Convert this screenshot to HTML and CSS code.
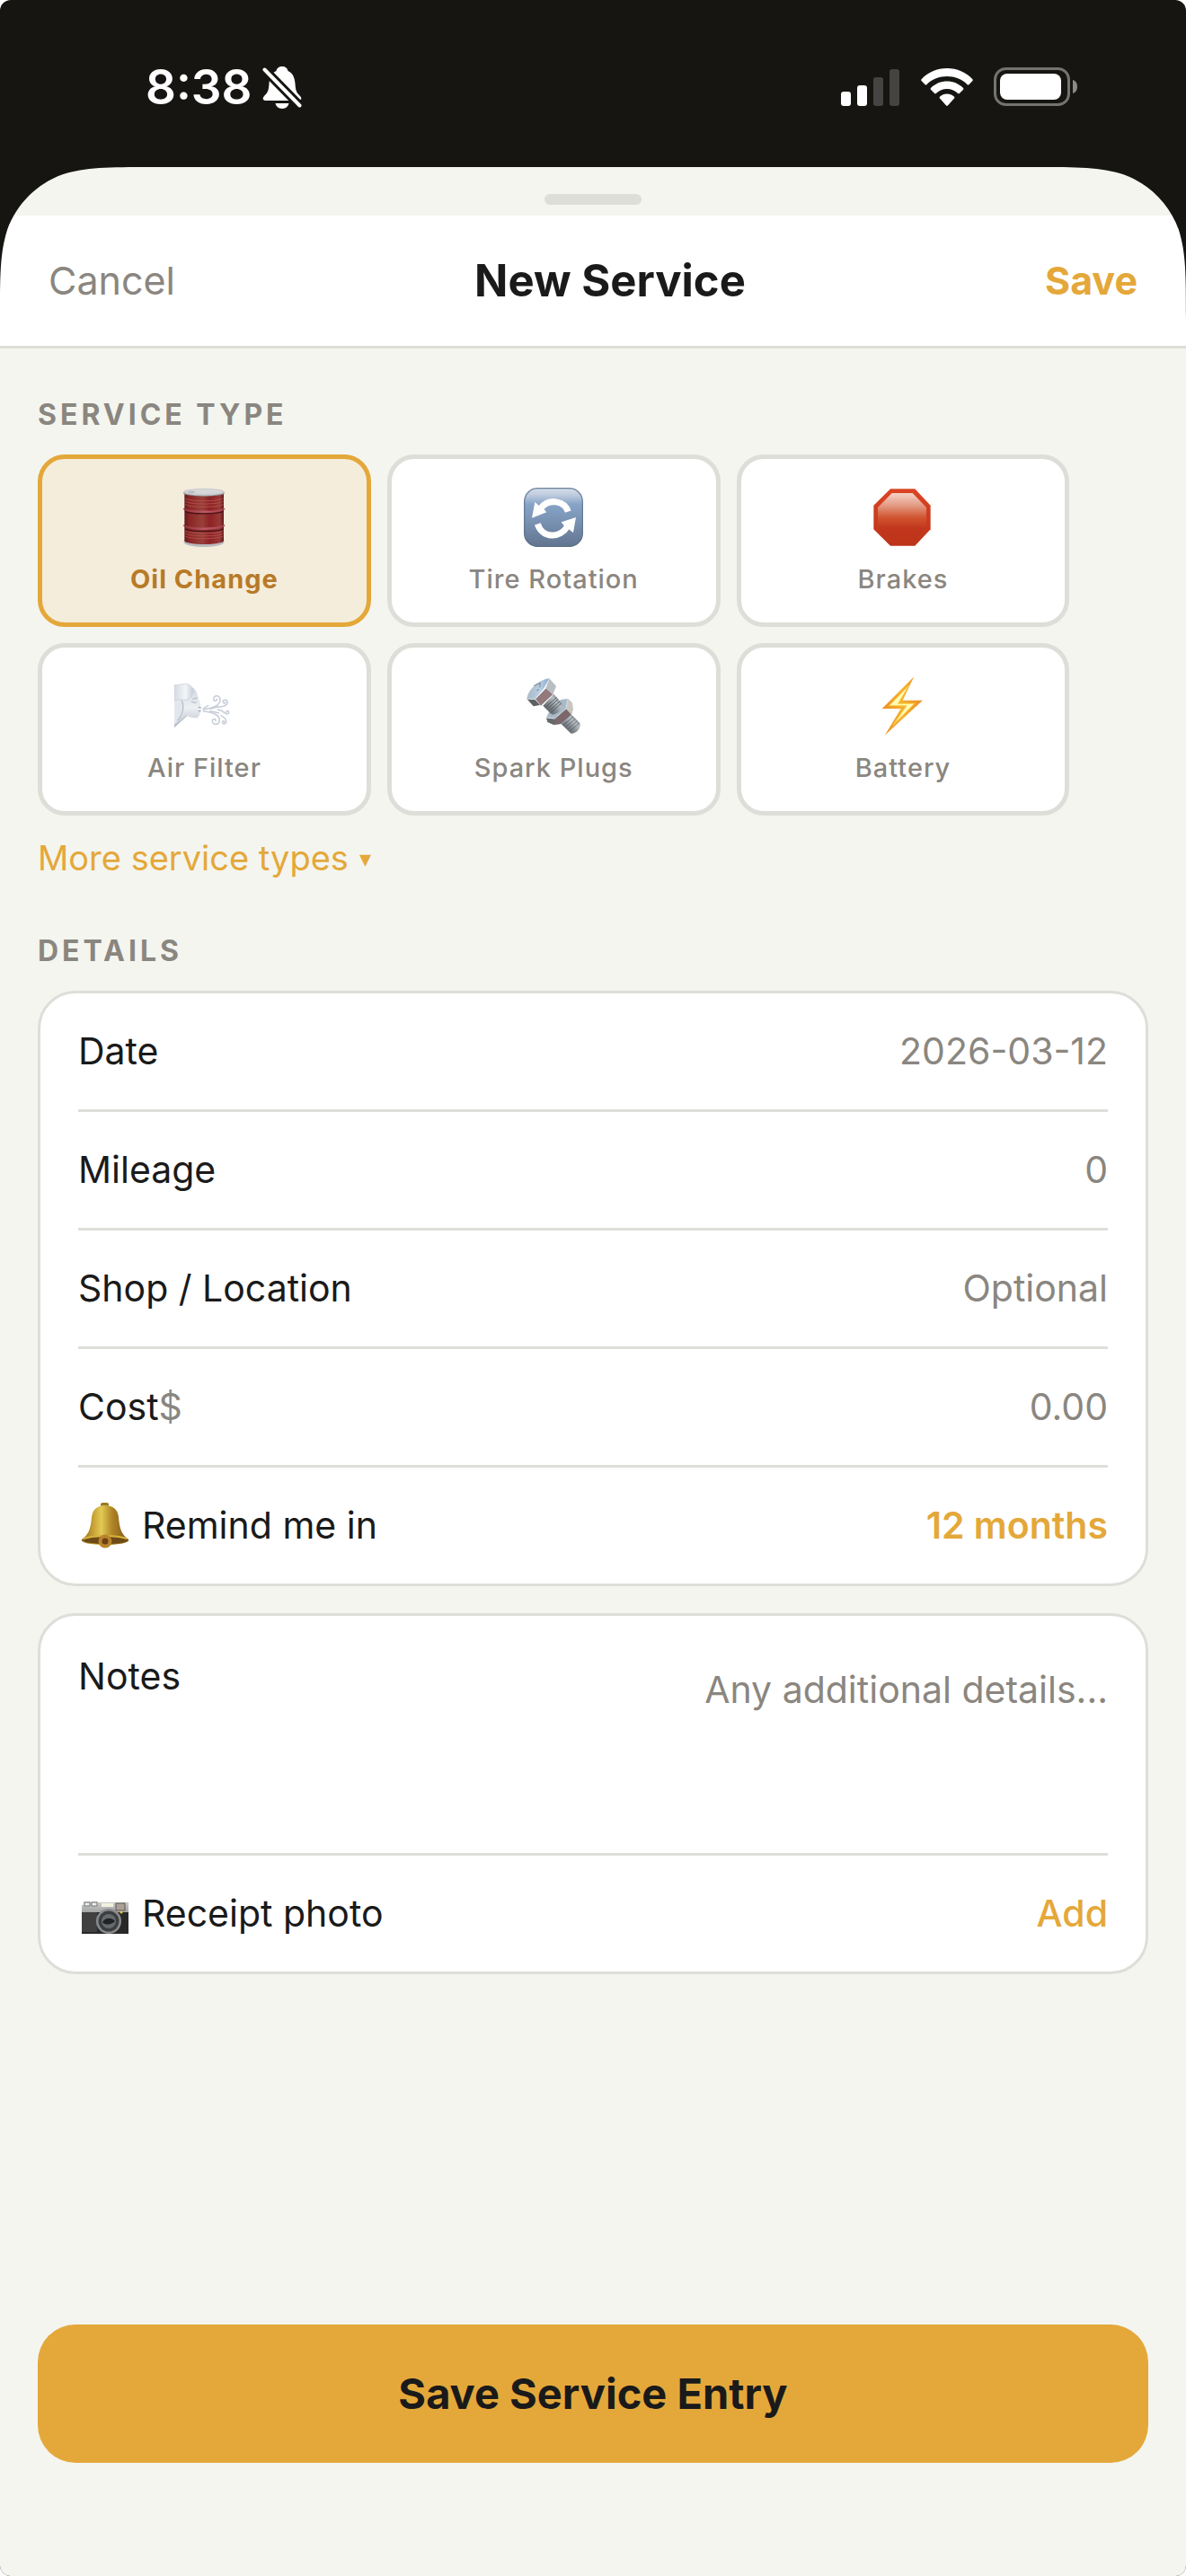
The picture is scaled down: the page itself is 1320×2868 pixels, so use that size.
FILE: index.html
```
<!DOCTYPE html>
<html lang="en">
<head>
    <meta charset="UTF-8">
    <meta name="viewport" content="width=device-width, initial-scale=1.0">
    <title>New Service</title>
    <link rel="stylesheet" href="styles.css">
</head>
<body>
    <div class="screen">
        <div class="status-bar">
            <div class="status-left">
                <span class="time">8:38</span>
                <svg class="muted-icon" viewBox="0 0 44 48" width="44" height="48">
                    <path d="M22 1c-3.500 0-6 2-6.500 5C10 8 8 14 7.500 20 7 28 6 30 2 34c-2.500 3-1 5 1.500 5h37c2.500 0 4-2.500 1.500-5-4-4-5-6-5.500-14C36 14 34 8 28.500 6 28 3 25.500 1 22 1z" fill="#fff"/>
                    <path d="M14.500 42h15c-.5 3-3.500 6-7.500 6s-7-3-7.500-6z" fill="#fff"/>
                    <path d="M1 3l42 43" stroke="#161512" stroke-width="10"/>
                    <path d="M2.500 4.500l39 40" stroke="#fff" stroke-width="4" stroke-linecap="round"/>
                </svg>
            </div>
            <div class="status-right">
                <svg viewBox="0 0 66 42" width="66" height="42">
                    <rect x="0" y="26" width="11" height="16" rx="3" fill="#fff"/>
                    <rect x="18" y="19" width="11" height="23" rx="3" fill="#fff"/>
                    <rect x="36" y="10" width="11" height="32" rx="3" fill="#454442"/>
                    <rect x="54" y="1" width="11" height="41" rx="3" fill="#454442"/>
                </svg>
                <svg viewBox="0 0 58 42" width="58" height="42">
                    <g fill="#fff">
                        <path d="M29 0C18 0 7.500 4.500.8 12c-.8.8-.8 1.500 0 2.300l3.600 3.600c.8.8 1.400.8 2.200 0C12.500 12 20.500 9 29 9s16.500 3 22.400 8.900c.8.8 1.400.8 2.200 0l3.600-3.600c.8-.8.8-1.500 0-2.300C50.500 4.500 40 0 29 0z"/>
                        <path d="M29 14.500c-6.800 0-13 2.600-17.800 7.200-.8.8-.8 1.500 0 2.300l3.700 3.700c.8.8 1.400.8 2.200 0 3.300-2.900 7.400-4.600 11.900-4.600s8.600 1.700 11.900 4.600c.8.8 1.400.8 2.200 0l3.700-3.700c.8-.8.8-1.500 0-2.300C42 17.100 35.800 14.500 29 14.500z"/>
                        <path d="M29 28.500c-3 0-5.700 1.100-7.800 2.900-.8.7-.8 1.500 0 2.300l6.700 7.500c.7.8 1.500.8 2.200 0l6.700-7.500c.8-.8.8-1.600 0-2.300-2.100-1.800-4.800-2.900-7.800-2.900z"/>
                    </g>
                </svg>
                <svg viewBox="0 0 94 44" width="94" height="44">
                    <rect x="1.500" y="1.500" width="82" height="40" rx="12" fill="none" stroke="#737370" stroke-width="3"/>
                    <rect x="7" y="7" width="68" height="29" rx="8" fill="#fff"/>
                    <path d="M88 14c3.500 1 5 4 5 7.500S91.500 28 88 29z" fill="#8a8a87"/>
                </svg>
            </div>
        </div>

        <main class="sheet">
            <svg class="corner corner-left" viewBox="0 0 168 168" width="168" height="168">
                <path d="M0 0H168C120 0 95.500 0 69.500 8.200C41 18.600 18.600 41 8.200 69.500C0 95.500 0 120 0 168Z" fill="#161512"/>
            </svg>
            <svg class="corner corner-right" viewBox="0 0 168 168" width="168" height="168">
                <path d="M168 0H0C48 0 72.500 0 98.500 8.200C127 18.600 149.400 41 159.800 69.500C168 95.500 168 120 168 168Z" fill="#161512"/>
            </svg>

            <div class="grabber"><span class="grabber-bar"></span></div>

            <header class="header">
                <button class="cancel-btn" type="button">Cancel</button>
                <h1>New Service</h1>
                <button class="save-btn" type="submit" form="service-form">Save</button>
            </header>

            <form class="content" id="service-form">
                <h2>SERVICE TYPE</h2>
                <div class="type-grid">
                    <button class="type selected" type="button">
                        <svg viewBox="489 339 198 198" width="66" height="66">
                            <defs>
                                <linearGradient id="drum"><stop offset="0" stop-color="#5d1c1c"/><stop offset=".12" stop-color="#8a2525"/><stop offset=".45" stop-color="#98403a"/><stop offset=".65" stop-color="#8c2224"/><stop offset=".9" stop-color="#9a3a38"/><stop offset="1" stop-color="#5a1a1a"/></linearGradient>
                                <linearGradient id="drum-rib"><stop offset="0" stop-color="#8e3038"/><stop offset=".5" stop-color="#c05a66"/><stop offset="1" stop-color="#a04048"/></linearGradient>
                            </defs>
                            <path d="M521 514v8c8 20 126 20 134 0v-8z" fill="#b9bbc0"/>
                            <path d="M523 355h131v162c-10 15-121 15-131 0z" fill="url(#drum)"/>
                            <path d="M524 374c12 12 118 12 129 0M524 384c12 12 118 12 129 0M524 394c12 12 118 12 129 0M524 482c12 12 118 12 129 0M524 491c12 12 118 12 129 0M524 500c12 12 118 12 129 0" fill="none" stroke="#b8534e" stroke-width="2.500"/>
                            <path d="M525 418c14 10 114 10 127 0M525 477c14 10 114 10 127 0" fill="none" stroke="#4a1417" stroke-width="4"/>
                            <path d="M521 408c12 15 122 15 135 0M521 463c12 17 122 17 135 0" fill="none" stroke="url(#drum-rib)" stroke-width="7"/>
                            <ellipse cx="588" cy="357" rx="69" ry="11" fill="#8f9194"/>
                            <ellipse cx="588" cy="353" rx="68" ry="12" fill="#c9cbce"/>
                            <ellipse cx="588" cy="352" rx="61" ry="8" fill="#d6d7d9"/>
                            <ellipse cx="546" cy="353" rx="12" ry="3" fill="#b3b6ba"/>
                        </svg>
                        <span>Oil Change</span>
                    </button>
                    <button class="type" type="button">
                        <svg viewBox="486 159 198 198" width="66" height="66">
                            <defs>
                                <linearGradient id="tile" x2="0" y2="1"><stop offset="0" stop-color="#d3dce9"/><stop offset=".1" stop-color="#c3cfe0"/><stop offset=".28" stop-color="#86a3c6"/><stop offset=".6" stop-color="#7890b0"/><stop offset="1" stop-color="#62758f"/></linearGradient>
                                <linearGradient id="tile-edge" x2="0" y2="1"><stop offset="0" stop-color="#6d83a1"/><stop offset="1" stop-color="#5f7088"/></linearGradient>
                            </defs>
                            <rect x="488" y="161" width="194" height="194" rx="44" fill="url(#tile)" stroke="url(#tile-edge)" stroke-width="4"/>
                            <g fill="none" stroke="#fff" stroke-width="21">
                                <path d="M634 239C622 202 570 194 544 226"/>
                                <path d="M532 280C548 330 608 328 631 289"/>
                            </g>
                            <path d="M513 260l10-53 14 12 17 13 8 9zM660 258l-9 51-12-9-20-16-8-10z" fill="#fff"/>
                        </svg>
                        <span>Tire Rotation</span>
                    </button>
                    <button class="type" type="button">
                        <svg viewBox="486 159 198 198" width="66" height="66">
                            <defs>
                                <linearGradient id="sign-edge" x2="0" y2="1"><stop offset="0" stop-color="#db4423"/><stop offset="1" stop-color="#bb341a"/></linearGradient>
                                <linearGradient id="sign" x2="0" y2="1"><stop offset="0" stop-color="#f5d2c8"/><stop offset=".25" stop-color="#e39a83"/><stop offset=".5" stop-color="#d05430"/><stop offset=".72" stop-color="#c1361c"/><stop offset="1" stop-color="#bd351a"/></linearGradient>
                            </defs>
                            <path d="M543 163h82l52 55v80l-52 55h-82l-56-55v-80z" fill="url(#sign-edge)"/>
                            <path d="M548 177h69l46 48v68l-46 48h-69l-47-48v-68z" fill="url(#sign)"/>
                        </svg>
                        <span>Brakes</span>
                    </button>
                    <button class="type" type="button">
                        <svg viewBox="489 159 198 198" width="66" height="66">
                            <defs>
                                <linearGradient id="wind"><stop offset="0" stop-color="#d5dbe3"/><stop offset=".6" stop-color="#f3f5f8"/><stop offset="1" stop-color="#c9d0da"/></linearGradient>
                                <linearGradient id="wind-face" x2="0" y2="1"><stop offset="0" stop-color="#d0d6df"/><stop offset=".5" stop-color="#edf0f4"/><stop offset="1" stop-color="#bac2cd"/></linearGradient>
                            </defs>
                            <path d="M489 230h45c8-8 14-20 16-34 12 8 16 22 18 32 2 10 10 22 10 30l-7 5 8 5-4 8 3 5-5 3c1 10-8 16-18 14-9 0-18-4-24-7l-42 39z" fill="url(#wind-face)"/>
                            <path d="M489 237c20-4 35 4 34 16-5 28-10 48-34 66z" fill="#e2e6ed"/>
                            <path d="M489 188c10 0 14-1 22-2 26-8 44 8 40 28-4 22-24 26-40 23-8-2-14 1-22 3z" fill="url(#wind)" stroke="#c4cbd6" stroke-width="2"/>
                            <path d="M513 239c10 18 7 44-14 68M546 243c8 5 12 5 18 2M550 235l16-4M489 328l42-38" fill="none" stroke="#abb4c1" stroke-width="3"/>
                            <path d="M569 262l10 2M569 275l9 0" stroke="#8f99a8" stroke-width="3"/>
                            <g fill="none" stroke="#c6ccd6" stroke-width="4.500" stroke-linecap="round">
                                <path d="M585 270c32-4 57-15 57-32 0-18-23-17-22-3 1 9 12 8 11 0"/>
                                <path d="M633 262c26-1 36-10 33-19-3-9-17-6-14 2 2 6 8 4 7 0"/>
                                <path d="M586 276c30 2 54 12 54 29 0 19-25 17-24 3 1-10 13-7 11 0"/>
                                <path d="M634 270c10 1 15 4 21 10 6 7 18 6 16-2-2-6-10-4-8 2"/>
                                <path d="M645 290c12 7 20 14 17 23-3 8-15 5-12-2 2-5 7-3 6 1"/>
                                <path d="M587 266l15-9M608 275l29 6M610 268l24-8"/>
                            </g>
                        </svg>
                        <span>Air Filter</span>
                    </button>
                    <button class="type" type="button">
                        <svg viewBox="486 159 198 198" width="66" height="66">
                            <defs>
                                <linearGradient id="steel" x1="0" y1="1" x2="1" y2="0"><stop offset="0" stop-color="#474c50"/><stop offset=".4" stop-color="#7d858b"/><stop offset=".65" stop-color="#b6bec4"/><stop offset="1" stop-color="#596673"/></linearGradient>
                                <linearGradient id="steel-top"><stop offset="0" stop-color="#aab9c5"/><stop offset=".6" stop-color="#b9cfe3"/><stop offset="1" stop-color="#86a9cb"/></linearGradient>
                            </defs>
                            <path d="M610 317l36-30 27 28c6 16-10 35-29 35z" fill="url(#steel)"/>
                            <path d="M617 323l34-29M624 330l34-29M631 337l34-29M638 343l33-28" stroke="#4d5357" stroke-width="2"/>
                            <path d="M561 297l14-30 37-31 21-2 15 14 2 22-5 17-34 32-24 2-19-8z" fill="#a8b9c8"/>
                            <path d="M561 297l28 4 17 17-20 3-21-9z" fill="#666a6b"/>
                            <path d="M589 299l38-32 18 20-36 31-19-1z" fill="#7c676a"/>
                            <path d="M627 267l6-32 15 14 2 22-5 16z" fill="#cbc6bf"/>
                            <path d="M550 257l36-39 27 31c6 19-16 37-32 38z" fill="url(#steel)"/>
                            <path d="M556 264l40-35M562 270l39-35M568 276l39-34M574 282l38-34" stroke="#484e53" stroke-width="2.500"/>
                            <path d="M496 234c3-23 27-60 75-68l-18 33-31 37z" fill="url(#steel-top)"/>
                            <path d="M496 234l27 2 17 19-22 4z" fill="#5c6060"/>
                            <path d="M525 235l35-36 23 20-40 38z" fill="#93797b"/>
                            <path d="M559 199l12-33 23 26-11 28z" fill="#b9bec2"/>
                            <path d="M496 234l27 2 36-37 12-33M561 297l28 3 38-33 6-32" fill="none" stroke="#d5e2eb" stroke-width="3"/>
                            <path d="M520 191l21-10-2 15M529 207l7-4" fill="none" stroke="#8997a5" stroke-width="4"/>
                        </svg>
                        <span>Spark Plugs</span>
                    </button>
                    <button class="type" type="button">
                        <svg viewBox="486 159 198 198" width="66" height="66">
                            <defs>
                                <linearGradient id="bolt-edge"><stop offset="0" stop-color="#ee8e24"/><stop offset=".5" stop-color="#f5b030"/><stop offset="1" stop-color="#ec8f2b"/></linearGradient>
                            </defs>
                            <path d="M622 160L515 267h63l-54 89 127-117h-67z" fill="url(#bolt-edge)"/>
                            <path d="M605 189l-66 68h58l-45 65 71-72h-54z" fill="#fffbb8" stroke="#fbcf45" stroke-width="3"/>
                        </svg>
                        <span>Battery</span>
                    </button>
                </div>
                <button class="more-btn" type="button">More service types <span class="caret">▾</span></button>

                <h2>DETAILS</h2>
                <div class="card">
                    <div class="row">
                        <label for="date">Date</label>
                        <input type="text" id="date" value="2026-03-12">
                    </div>
                    <div class="row">
                        <label for="mileage">Mileage</label>
                        <input type="text" id="mileage" placeholder="0">
                    </div>
                    <div class="row">
                        <label for="shop">Shop / Location</label>
                        <input type="text" id="shop" placeholder="Optional">
                    </div>
                    <div class="row">
                        <label for="cost">Cost</label>
                        <span class="currency">$</span>
                        <input type="text" id="cost" placeholder="0.00">
                    </div>
                    <div class="row">
                        <span class="row-label">
                            <svg viewBox="-3 1 57 51" width="57" height="51">
                                <defs>
                                    <linearGradient id="brass"><stop offset="0" stop-color="#8a6a1c"/><stop offset=".25" stop-color="#c9a236"/><stop offset=".42" stop-color="#e2ca55"/><stop offset=".65" stop-color="#b08426"/><stop offset="1" stop-color="#7c5717"/></linearGradient>
                                </defs>
                                <rect x="22" y="1" width="9" height="5" rx="2" fill="#9b7a25"/>
                                <path d="M27 4c9 0 14 5 15 13 1 14 4 20 11 25 2 4-14 6-26 6S-1 46 1 42c7-5 10-11 11-25 1-8 6-13 15-13z" fill="url(#brass)"/>
                                <ellipse cx="27" cy="43" rx="24" ry="4" fill="#6d4a16"/>
                                <path d="M3 41c12-4 37-4 48 0" fill="none" stroke="#d7b13f" stroke-width="2"/>
                                <circle cx="27" cy="44" r="7.500" fill="#b8842b"/>
                                <circle cx="27" cy="44" r="3.500" fill="#6d3f17"/>
                            </svg>
                            Remind me in
                        </span>
                        <button class="row-btn strong" type="button">12 months</button>
                    </div>
                </div>

                <div class="card">
                    <div class="row notes-row">
                        <label for="notes">Notes</label>
                        <textarea id="notes" placeholder="Any additional details..."></textarea>
                    </div>
                    <div class="row">
                        <span class="row-label">
                            <svg viewBox="-3 0 57 51" width="57" height="51">
                                <defs>
                                    <linearGradient id="chrome" x2="0" y2="1"><stop offset="0" stop-color="#cfcfcf"/><stop offset="1" stop-color="#9e9fa0"/></linearGradient>
                                </defs>
                                <path d="M1 16h2v-4h16v1h34v12H1z" fill="url(#chrome)"/>
                                <path d="M4 13h6v4H4zM12 13h6v4h-6z" fill="#eee" stroke="#777" stroke-width="1"/>
                                <rect x="23" y="14" width="13" height="4" fill="#f3f1df"/>
                                <rect x="39" y="14" width="10" height="8" fill="#aaa096" stroke="#5e5955" stroke-width="1"/>
                                <rect x="1" y="24" width="52" height="24" fill="#292929"/>
                                <rect x="1" y="24" width="17" height="22" fill="#404040"/>
                                <circle cx="31" cy="34" r="14" fill="#898b8d"/>
                                <circle cx="31" cy="34" r="11.500" fill="#3c3f41"/>
                                <circle cx="31" cy="34" r="8" fill="#666a6c"/>
                                <path d="M24 35c3-5 10-6 14-1-4 4-10 5-14 1z" fill="#202224"/>
                                <circle cx="45" cy="24" r="1.500" fill="#f2c82e"/>
                            </svg>
                            Receipt photo
                        </span>
                        <button class="row-btn" type="button">Add</button>
                    </div>
                </div>

                <button class="submit-btn" type="submit">Save Service Entry</button>
            </form>
        </main>
    </div>
</body>
</html>
```
FILE: styles.css
```
* {
    box-sizing: border-box;
}

body {
    margin: 0;
    background-color: white;
    color: #1a1a1a;
    font-family: Inter, "Liberation Sans", sans-serif;
    font-size: 41px;
    line-height: 51px;
}

h1, h2 {
    margin: 0;
}

button, input, textarea {
    font: inherit;
    color: inherit;
    background: none;
    border: none;
    margin: 0;
    padding: 0;
}

button {
    cursor: pointer;
}

svg {
    display: block;
    flex: none;
}

.screen {
    display: flex;
    flex-direction: column;
    min-height: 100vh;
    background-color: #161512;
    border-radius: 12px;
    overflow: hidden;
}

/* status bar */
.status-bar {
    display: flex;
    justify-content: space-between;
    padding: 67px 120px 59px 162px;
}

.status-left, .status-right {
    display: flex;
    align-items: center;
    height: 60px;
}

.status-left {
    gap: 12px;
}

.status-right {
    gap: 23px;
}

.time {
    color: white;
    font-size: 53px;
    font-weight: 600;
}

/* sheet */
.sheet {
    position: relative;
    display: flex;
    flex-direction: column;
    flex: 1;
    background-color: #f4f5ef;
}

.corner {
    position: absolute;
    top: 0;
}

.corner-left {
    left: 0;
}

.corner-right {
    right: 0;
}

.grabber {
    display: flex;
    justify-content: center;
    padding: 30px 0 12px;
}

.grabber-bar {
    width: 108px;
    height: 12px;
    border-radius: 6px;
    background-color: #deded9;
}

.header {
    display: flex;
    align-items: center;
    justify-content: space-between;
    padding: 42px 54px;
    background-color: white;
    border-bottom: 3px solid #deded9;
}

.header h1 {
    font-size: 49px;
    line-height: 61px;
    font-weight: 700;
}

.cancel-btn, .save-btn {
    font-size: 43px;
}

.cancel-btn {
    color: #8a8680;
}

.save-btn {
    color: #e4a83a;
    font-weight: 700;
}

.content {
    display: flex;
    flex-direction: column;
    flex: 1;
    padding: 54px 42px 126px;
}

.content h2 {
    margin-bottom: 24px;
    color: #8a8680;
    font-size: 32px;
    line-height: 40px;
    font-weight: 700;
    letter-spacing: 4px;
}

/* service types */
.type-grid {
    display: flex;
    flex-wrap: wrap;
    gap: 18px;
}

.type {
    display: flex;
    flex-direction: column;
    align-items: center;
    gap: 18px;
    width: 30%;
    padding: 32px 0 30px;
    background-color: white;
    border: 5px solid #deded9;
    border-radius: 30px;
    color: #8a8680;
    font-size: 29px;
    line-height: 36px;
    font-weight: 500;
    letter-spacing: 1px;
}

.type.selected {
    background-color: #f5eddb;
    border-color: #e4a83a;
    color: #b87a28;
    font-weight: 700;
}

.more-btn {
    display: flex;
    align-items: center;
    gap: 12px;
    align-self: flex-start;
    margin: 24px 0 60px;
    color: #e4a83a;
    font-size: 38px;
    line-height: 47px;
}

.caret {
    font-size: 26px;
    line-height: 26px;
}

/* cards */
.card {
    margin-bottom: 30px;
    padding: 0 42px;
    background-color: white;
    border: 3px solid #deded9;
    border-radius: 42px;
}

.row {
    display: flex;
    align-items: center;
    padding: 39px 0;
}

.row + .row {
    border-top: 3px solid #deded9;
}

.row input, .row textarea {
    flex: 1;
    min-width: 0;
    height: 51px;
    color: #8a8680;
    text-align: right;
    outline: none;
}

.row input::placeholder, .row textarea::placeholder {
    color: #8a8680;
    opacity: 1;
}

.row-label {
    display: flex;
    align-items: center;
    gap: 14px;
}

.currency {
    color: #8a8680;
}

.row-btn {
    margin-left: auto;
    color: #e4a83a;
    font-weight: 500;
}

.row-btn.strong {
    font-weight: 600;
}

.row.notes-row {
    align-items: flex-start;
    padding: 42px 0;
}

.row textarea {
    height: 180px;
    padding-top: 15px;
    resize: none;
}

.submit-btn {
    margin-top: auto;
    padding: 47px 0;
    background-color: #e4a83a;
    border-radius: 42px;
    font-size: 47px;
    line-height: 60px;
    font-weight: 700;
}
```
